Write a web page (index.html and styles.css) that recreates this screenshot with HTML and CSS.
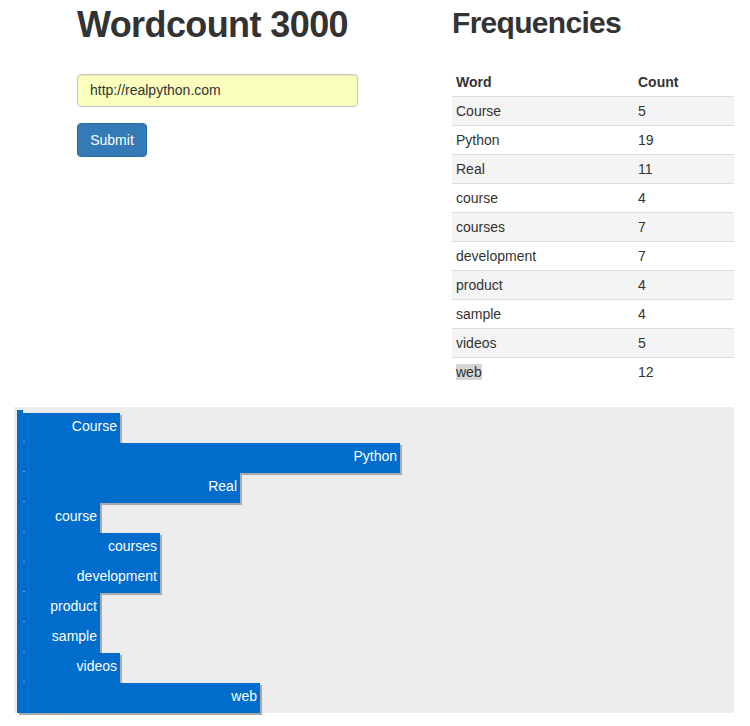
FILE: index.html
```html
<!DOCTYPE html>
<html>
<head>
<meta charset="utf-8">
<title>Wordcount 3000</title>
<link rel="stylesheet" href="styles.css">
</head>
<body>
<div class="top">
  <div class="left-col">
    <h1 class="title">Wordcount 3000</h1>
    <form class="url-form">
      <input class="url-input" type="text" value="http://realpython.com">
      <button class="submit-btn" type="button">Submit</button>
    </form>
  </div>
  <div class="right-col">
    <h2 class="subtitle">Frequencies</h2>
    <table class="freq-table">
      <thead>
        <tr><th class="col-word">Word</th><th class="col-count">Count</th></tr>
      </thead>
      <tbody>
        <tr><td>Course</td><td>5</td></tr>
        <tr><td>Python</td><td>19</td></tr>
        <tr><td>Real</td><td>11</td></tr>
        <tr><td>course</td><td>4</td></tr>
        <tr><td>courses</td><td>7</td></tr>
        <tr><td>development</td><td>7</td></tr>
        <tr><td>product</td><td>4</td></tr>
        <tr><td>sample</td><td>4</td></tr>
        <tr><td>videos</td><td>5</td></tr>
        <tr><td><span class="hl">web</span></td><td>12</td></tr>
      </tbody>
    </table>
  </div>
</div>
<div class="chart">
  <div class="bar first" style="width:103px">Course</div>
  <div class="bar" style="width:383px">Python</div>
  <div class="bar" style="width:223px">Real</div>
  <div class="bar" style="width:83px">course</div>
  <div class="bar" style="width:143px">courses</div>
  <div class="bar" style="width:143px">development</div>
  <div class="bar" style="width:83px">product</div>
  <div class="bar" style="width:83px">sample</div>
  <div class="bar" style="width:103px">videos</div>
  <div class="bar" style="width:243px">web</div>
</div>
</body>
</html>
```
FILE: styles.css
```css
html, body {
  margin: 0;
  padding: 0;
  background: #fff;
}
body {
  font-family: "Liberation Sans", Arial, Helvetica, sans-serif;
  font-size: 14px;
  line-height: 20px;
  color: #333;
  width: 750px;
  height: 726px;
  overflow: hidden;
}
.top {
  display: flex;
  padding-left: 77px;
}
.left-col {
  width: 281px;
}
.right-col {
  width: 282px;
  margin-left: 94px;
}
.title {
  font-size: 36px;
  font-weight: bold;
  letter-spacing: -0.6px;
  line-height: 39.6px;
  margin: 5px 0 29px 0;
  color: #333;
}
.url-form {
  display: flex;
  flex-direction: column;
  align-items: flex-start;
  gap: 16px;
}
.url-input {
  box-sizing: border-box;
  width: 281px;
  height: 33px;
  padding: 6px 12px;
  font-family: inherit;
  font-size: 14px;
  color: #333;
  background: #faffbd;
  border: 1px solid #c4c4c4;
  border-radius: 4px;
  box-shadow: inset 0 1px 1px rgba(0,0,0,0.075);
  outline: none;
}
.submit-btn {
  box-sizing: border-box;
  width: 70px;
  height: 34px;
  padding: 6px 12px;
  font-family: inherit;
  font-size: 14px;
  color: #fff;
  background: #337ab7;
  border: 1px solid #2e6da4;
  border-radius: 4px;
}
.subtitle {
  font-size: 30px;
  font-weight: bold;
  letter-spacing: -0.7px;
  line-height: 33px;
  margin: 6px 0 29px 0;
  color: #333;
}
.freq-table {
  width: 282px;
  border-collapse: collapse;
  border-spacing: 0;
}
.freq-table th,
.freq-table td {
  text-align: left;
  padding: 4px 4px;
  line-height: 20px;
  vertical-align: top;
}
.freq-table th {
  font-weight: bold;
  border-bottom: 1px solid #ddd;
}
.col-word { width: 174px; }
.freq-table tbody td {
  border-top: 1px solid #ddd;
}
.freq-table tbody tr:first-child td {
  border-top: 0;
}
.freq-table tbody tr:nth-child(odd) td {
  background: #f4f4f4;
}
.hl {
  background: #d6d6d6;
}
.chart {
  margin: 21px 0 0 14px;
  width: 720px;
  height: 306px;
  box-sizing: border-box;
  padding: 6px 0 0 3px;
  background: #ededed;
}
.bar {
  position: relative;
  box-sizing: border-box;
  height: 30px;
  line-height: 27px;
  padding-right: 3px;
  text-align: right;
  color: #fff;
  font-size: 14px;
  background: #006dcc;
  box-shadow: 2px 2px 0 #a9a9a9;
}
.bar::before {
  content: "";
  position: absolute;
  left: 6px;
  top: -2px;
  width: 2px;
  height: 1px;
  background: #8aa0b8;
}
.bar.first::before {
  left: 0;
  top: -3px;
  width: 6px;
  height: 3px;
  background: #006dcc;
}
```
